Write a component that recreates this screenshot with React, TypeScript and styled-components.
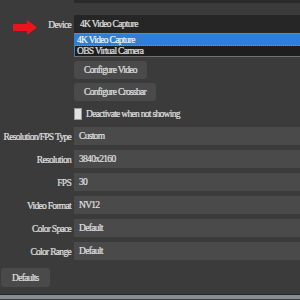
import React from 'react'
import styled, { createGlobalStyle } from 'styled-components'

const GlobalStyle = createGlobalStyle`
  html, body {
    margin: 0;
    padding: 0;
    background: #3b3b3b;
  }
`

const Window = styled.div`
  width: 300px;
  height: 300px;
  overflow: hidden;
  background: #3b3b3b;
  color: #e0e0e0;
  font-family: 'Liberation Serif', 'Times New Roman', serif;
  font-size: 9.5px;
  letter-spacing: -0.7px;
  -webkit-text-stroke: 0.2px #e0e0e0;
  display: flex;
  flex-direction: column;
`

const TopEdge = styled.div`
  height: 3px;
  margin-left: 74px;
  background: #2a2a2a;
`

const Row = styled.div<{ $top: number; $height?: number }>`
  display: grid;
  grid-template-columns: 71px 1fr;
  column-gap: 3px;
  align-items: center;
  margin-top: ${(p) => p.$top}px;
  height: ${(p) => p.$height ?? 18}px;
`

const Label = styled.div`
  display: flex;
  align-items: center;
  justify-content: flex-end;
  white-space: nowrap;
  padding-top: 1px;
`

const Arrow = styled.svg`
  margin-right: auto;
  margin-left: 13px;
  margin-top: 6px;
  flex: none;
`

const Field = styled.div`
  height: 18px;
  background: #4a4a4a;
  display: flex;
  align-items: center;
  padding-left: 5px;
  white-space: nowrap;
`

const Combo = styled.div`
  position: relative;
  height: 18px;
  background: #262626;
  display: flex;
  align-items: center;
  padding-left: 6px;
`

const Popup = styled.div`
  position: absolute;
  top: 18px;
  left: 0;
  right: 0;
  background: #1e1e1e;
  border-top: 1px solid #8a8478;
  border-bottom: 1px solid #707070;
  border-left: 1px solid #2d7fd8;
  z-index: 2;
`

const Option = styled.div<{ $selected?: boolean }>`
  height: ${(p) => (p.$selected ? 11 : 10)}px;
  display: flex;
  align-items: center;
  padding-left: 2px;
  white-space: nowrap;
  color: ${(p) => (p.$selected ? '#ffffff' : '#e0e0e0')};
  background: ${(p) => (p.$selected ? '#2d80da' : 'transparent')};
  border-bottom: ${(p) => (p.$selected ? '1px dotted #b08a5a' : 'none')};
`

const Button = styled.div`
  justify-self: start;
  height: 18px;
  padding: 0 10px;
  display: flex;
  align-items: center;
  background: #4a4a4a;
  border-radius: 3px;
  white-space: nowrap;
`

const CheckRow = styled.div`
  display: flex;
  align-items: center;
  gap: 4px;
  white-space: nowrap;
`

const Check = styled.div`
  width: 6px;
  height: 10px;
  background: #e2e2e2;
  border: 1px solid #9a9a9a;
  flex: none;
`

const Footer = styled.div`
  margin-top: 8px;
  margin-left: 1px;
  align-self: flex-start;
  height: 19px;
  padding: 0 11px;
  display: flex;
  align-items: center;
  background: #4a4a4a;
  border-radius: 3px;
`

const StatusEdge = styled.div`
  margin-top: 7px;
  height: 4px;
  border-top: 1px solid #262626;
  background: #858c94;
`

const fields: [string, string][] = [
  ['Resolution/FPS Type', 'Custom'],
  ['Resolution', '3840x2160'],
  ['FPS', '30'],
  ['Video Format', 'NV12'],
  ['Color Space', 'Default'],
  ['Color Range', 'Default'],
]

export default function App() {
  return (
    <>
      <GlobalStyle />
      <Window>
        <TopEdge />
        <Row $top={10}>
          <Label>
            <Arrow width="24" height="15" viewBox="0 0 24 15">
              <path d="M0 4 H14 V0 L24 7.5 L14 15 V11 H0 Z" fill="#e8151b" />
            </Arrow>
            Device
          </Label>
          <Combo>
            4K Video Capture
            <Popup>
              <Option $selected>4K Video Capture</Option>
              <Option>OBS Virtual Camera</Option>
            </Popup>
          </Combo>
        </Row>
        <Row $top={30}>
          <span />
          <Button>Configure Video</Button>
        </Row>
        <Row $top={4}>
          <span />
          <Button>Configure Crossbar</Button>
        </Row>
        <Row $top={7} $height={11}>
          <span />
          <CheckRow>
            <Check />
            Deactivate when not showing
          </CheckRow>
        </Row>
        {fields.map(([label, value], i) => (
          <Row key={label} $top={i === 0 ? 8 : 5}>
            <Label>{label}</Label>
            <Field>{value}</Field>
          </Row>
        ))}
        <Footer>Defaults</Footer>
        <StatusEdge />
      </Window>
    </>
  )
}
